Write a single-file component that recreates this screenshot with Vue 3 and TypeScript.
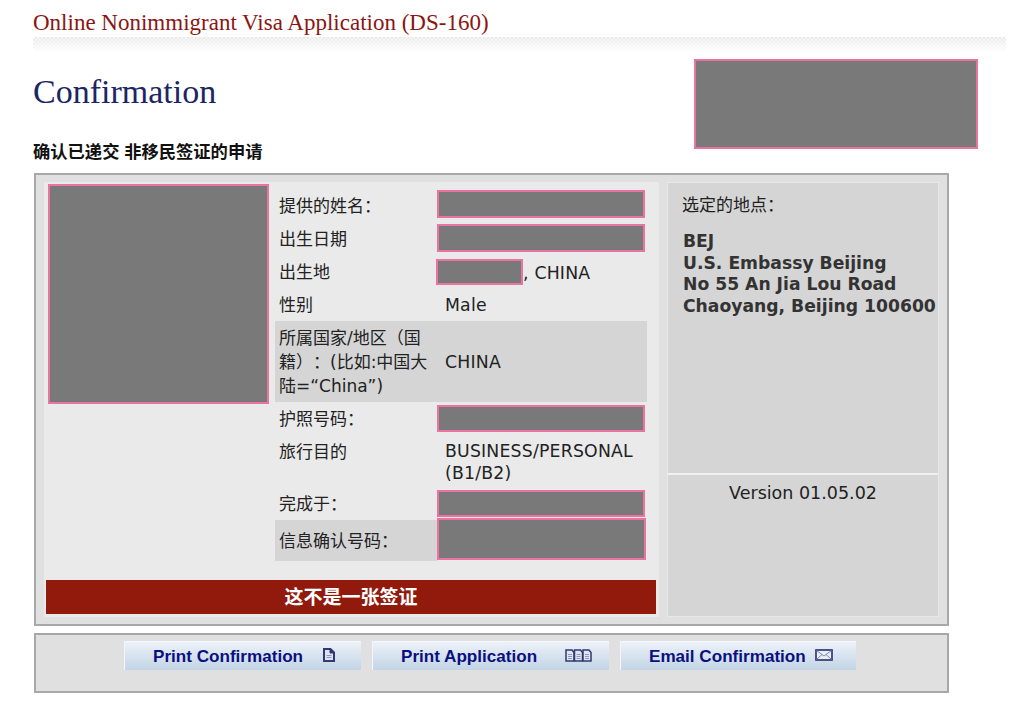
<script setup lang="ts">
interface Action { label: string; icon: 'doc' | 'docs' | 'mail'; }
const actions: Action[] = [
  { label: 'Print Confirmation', icon: 'doc' },
  { label: 'Print Application', icon: 'docs' },
  { label: 'Email Confirmation', icon: 'mail' },
];
</script>

<template>
  <div class="page">
    <div class="program">Online Nonimmigrant Visa Application (DS-160)</div>
    <div class="stripe"></div>
    <div class="head">
      <h1>Confirmation</h1>
      <div class="redact barcode"></div>
    </div>
    <h2>确认已递交 非移民签证的申请</h2>

    <section class="panel main">
      <div class="left">
        <div class="top">
          <div class="redact photo"></div>
          <div class="table">
            <div class="row r1"><span class="label">提供的姓名：</span><div class="redact field"></div></div>
            <div class="row r2"><span class="label">出生日期</span><div class="redact field"></div></div>
            <div class="row r3"><span class="label">出生地</span><div class="birth"><div class="redact city"></div><span>, CHINA</span></div></div>
            <div class="row r4"><span class="label">性别</span><span class="value">Male</span></div>
            <div class="row r5 shaded"><span class="label">所属国家/地区（国籍）：(比如:中国大陆=“China”)</span><span class="value">CHINA</span></div>
            <div class="row r6"><span class="label">护照号码：</span><div class="redact field"></div></div>
            <div class="row r7"><span class="label">旅行目的</span><span class="value">BUSINESS/PERSONAL (B1/B2)</span></div>
            <div class="row r8"><span class="label">完成于：</span><div class="redact field"></div></div>
            <div class="row r9"><span class="label">信息确认号码：</span><div class="redact field tall"></div></div>
          </div>
        </div>
        <div class="banner">这不是一张签证</div>
      </div>
      <aside class="right">
        <div class="location">
          <div class="loc-title">选定的地点：</div>
          <div class="address">BEJ<br>U.S. Embassy Beijing<br>No 55 An Jia Lou Road<br>Chaoyang, Beijing 100600</div>
        </div>
        <div class="version">Version 01.05.02</div>
      </aside>
    </section>

    <section class="panel actions">
      <button v-for="a in actions" :key="a.label" type="button" :class="['btn', a.icon]">
        <span>{{ a.label }}</span>
        <svg v-if="a.icon === 'doc'" width="12" height="14" viewBox="0 0 12 14" aria-hidden="true">
          <path d="M1 1h6.500L11 4.500V13H1Z" fill="#dfe5ef" stroke="#2f3973" stroke-width="2"/>
          <path d="M7 1v4h4Z" fill="#2f3973" stroke="#2f3973"/>
          <path d="M3.500 7.500h5M3.500 9.500h5" fill="none" stroke="#8f98bb"/>
        </svg>
        <svg v-else-if="a.icon === 'docs'" width="27" height="13" viewBox="0 0 27 13" aria-hidden="true">
          <g fill="#dfe5ef" stroke="#2f3973" stroke-width="1.500">
            <path d="M1 1h6l2 2.500V12H1Z"/>
            <path d="M9.500 1h6l2 2.500V12h-8Z"/>
            <path d="M18 1h6l2 2.500V12h-8Z"/>
          </g>
          <path d="M3 5.500h4M3 7.500h4M3 9.500h4M11.500 5.500h4M11.500 7.500h4M11.500 9.500h4M20 5.500h4M20 7.500h4M20 9.500h4" fill="none" stroke="#8f98bb"/>
        </svg>
        <svg v-else width="18" height="12" viewBox="0 0 18 12" aria-hidden="true">
          <rect x="1" y="1" width="16" height="10" fill="#e9eef5" stroke="#2f3973" stroke-width="1.700"/>
          <path d="M1.500 1.500 9 7l7.500-5.500M1.500 10.500l5.500-5M16.500 10.500l-5.500-5" fill="none" stroke="#7f88ad" stroke-width="1"/>
        </svg>
      </button>
    </section>
  </div>
</template>

<style scoped>
.page {
  width: 1024px;
  height: 704px;
  box-sizing: border-box;
  padding-left: 33px;
  overflow: hidden;
  background: #fff;
  font-family: "DejaVu Sans", "Noto Sans CJK SC", sans-serif;
  font-size: 17px;
  color: #222;
  text-spacing-trim: space-all;
}
.program {
  height: 37px;
  padding-top: 9px;
  box-sizing: border-box;
  font-family: "Liberation Serif", serif;
  font-size: 23px;
  line-height: 27px;
  color: #8b1512;
  white-space: nowrap;
}
.stripe {
  width: 973px;
  height: 16px;
  background:
    linear-gradient(to bottom, rgba(255, 255, 255, 0), #fff),
    repeating-conic-gradient(#e9e9e9 0 25%, #f5f5f5 0 50%) 0 0 / 4px 4px;
}
.head {
  display: flex;
  justify-content: space-between;
  width: 945px;
  height: 96px;
  padding-top: 6px;
  box-sizing: border-box;
}
h1 {
  margin: 12px 0 0;
  font-family: "Liberation Serif", serif;
  font-size: 34px;
  line-height: 42px;
  font-weight: 400;
  color: #1b2663;
}
.redact {
  box-sizing: border-box;
  background: #797979;
  border: 2px solid #ea739f;
}
.barcode {
  width: 284px;
  height: 90px;
}
h2 {
  margin: 0;
  height: 23px;
  margin-top: -7px;
  font-size: 17.3px;
  line-height: 20px;
  font-weight: 700;
  color: #111;
  font-family: "Liberation Sans", "Noto Sans CJK SC", sans-serif;
}
.panel {
  box-sizing: border-box;
  width: 915px;
  margin-left: 1px;
  background: #e0e0e0;
  border: 2px solid #a8a8a8;
}
.main {
  display: flex;
  gap: 8px;
  height: 453px;
  margin-top: 8px;
  padding: 7px 8px;
}
.left {
  display: flex;
  flex-direction: column;
  justify-content: space-between;
  box-sizing: border-box;
  width: 615px;
  height: 435px;
  padding: 2px 3px 3px 2px;
  background: #eaeaea;
}
.top {
  display: flex;
  align-items: flex-start;
}
.photo {
  flex: none;
  width: 221px;
  height: 220px;
  margin-left: 2px;
}
.table {
  width: 372px;
  margin-left: 6px;
  padding-top: 4px;
}
.row {
  display: grid;
  grid-template-columns: 162px 1fr;
  align-items: center;
  line-height: 24px;
}
.label {
  padding-left: 4px;
}
.r1 .label { padding-top: 2px; }
.value {
  padding-left: 8px;
  font-size: 17.3px;
  letter-spacing: 0.2px;
}
.field {
  width: 208px;
  height: 28px;
  margin-top: -2px;
}
.r1, .r2 { height: 34px; }
.r3 { height: 32px; }
.r4 { height: 33px; }
.r5 { height: 81px; }
.r6 { height: 33px; }
.r6 .field { margin-top: 0; height: 27px; }
.r7 { height: 53px; align-items: start; padding-top: 5px; box-sizing: border-box; }
.r7 .value { padding-top: 1px; line-height: 21.5px; }
.r8 { height: 32px; }
.r8 .field { height: 27px; }
.r9 {
  height: 41px;
  background: linear-gradient(to right, #d5d5d5 162px, transparent 162px);
}
.shaded { background: #d5d5d5; }
.r9 .tall {
  align-self: start;
  height: 42px;
  margin-top: -2px;
  width: 209px;
}
.birth {
  display: flex;
  align-items: center;
  font-size: 17.3px;
  letter-spacing: 0.2px;
}
.birth span {
  padding-top: 2px;
}
.city {
  width: 87px;
  height: 26px;
  margin-left: -1px;
}
.banner {
  height: 34px;
  font-family: "Liberation Sans", "Noto Sans CJK SC", sans-serif;
  font-size: 19px;
  line-height: 36px;
  font-weight: 700;
  text-align: center;
  color: #fff;
  background: #911a0d;
}
.right {
  display: flex;
  flex-direction: column;
  box-sizing: border-box;
  width: 272px;
  height: 435px;
  background: #d5d5d5;
  border: 1px solid #e8e8e8;
}
.location {
  height: 280px;
  padding: 10px 0 0 14px;
  border-bottom: 2px solid #f0f0f0;
}
.loc-title {
  line-height: 24px;
}
.address {
  margin-top: 14px;
  margin-left: 1px;
  font-size: 17.2px;
  font-weight: 700;
  line-height: 21.7px;
  color: #333;
  white-space: nowrap;
}
.version {
  padding-top: 7px;
  font-size: 17.5px;
  text-align: center;
  line-height: 22px;
}
.actions {
  display: flex;
  gap: 11px;
  height: 60px;
  margin-top: 7px;
  padding: 6px 0 0 88px;
}
.btn {
  display: flex;
  align-items: center;
  width: 237px;
  height: 29px;
  padding: 2px 0 0 28px;
  box-sizing: border-box;
  border: 0;
  border-left: 1px solid #f3f6fa;
  border-top: 1px solid #f3f6fa;
  background: linear-gradient(to bottom, #edf2f9, #c2d4e5);
  font-family: "Liberation Sans", sans-serif;
  font-size: 17.1px;
  font-weight: 700;
  color: #0b1080;
  white-space: nowrap;
}
.btn svg { margin-bottom: 4px; }
.doc svg { margin-left: 20px; }
.docs svg { margin-left: 28px; }
.mail svg { margin-left: 9px; }
.mail { width: 236px; }
</style>
